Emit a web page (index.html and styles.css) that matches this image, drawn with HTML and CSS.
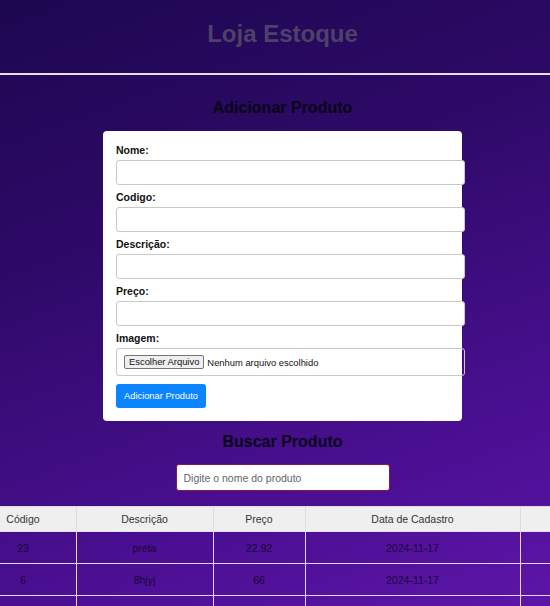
FILE: index.html
```html
<!DOCTYPE html>
<html lang="pt-BR">
<head>
<meta charset="utf-8">
<title>Loja Estoque</title>
<link rel="stylesheet" href="styles.css">
</head>
<body>
<div class="page">
  <header class="top">
    <h1 class="brand">Loja Estoque</h1>
  </header>

  <h2 class="section-title">Adicionar Produto</h2>
  <form class="card">
    <label class="lbl">Nome:</label>
    <input class="field" type="text">
    <label class="lbl">Codigo:</label>
    <input class="field" type="text">
    <label class="lbl">Descrição:</label>
    <input class="field" type="text">
    <label class="lbl">Preço:</label>
    <input class="field" type="text">
    <label class="lbl">Imagem:</label>
    <div class="file-field">
      <span class="file-btn">Escolher Arquivo</span>
      <span class="file-text">Nenhum arquivo escolhido</span>
    </div>
    <button class="submit" type="button">Adicionar Produto</button>
  </form>

  <h2 class="section-title search-title">Buscar Produto</h2>
  <input class="search" type="text" placeholder="Digite o nome do produto">

  <table class="grid">
    <colgroup>
      <col class="c1"><col class="c2"><col class="c3"><col class="c4"><col class="c5">
    </colgroup>
    <thead>
      <tr><th>Código</th><th>Descrição</th><th>Preço</th><th>Data de Cadastro</th><th></th></tr>
    </thead>
    <tbody>
      <tr><td>23</td><td>preta</td><td>22.92</td><td>2024-11-17</td><td></td></tr>
      <tr><td>6</td><td>8hjyj</td><td>66</td><td>2024-11-17</td><td></td></tr>
      <tr><td>&nbsp;</td><td></td><td></td><td></td><td></td></tr>
    </tbody>
  </table>
</div>
</body>
</html>
```

FILE: styles.css
```css
html, body {
  margin: 0;
  padding: 0;
  height: 100%;
}
body {
  overflow: hidden;
  font-family: "Liberation Sans", Arial, sans-serif;
  background: linear-gradient(160deg, #1d0750 0%, #2e0a68 35%, #4a0f92 75%, #5d15a8 100%);
  background-attachment: fixed;
}
.page {
  width: 565px;
  display: flex;
  flex-direction: column;
  align-items: center;
}
.top {
  align-self: stretch;
  box-sizing: border-box;
  height: 75px;
  padding-bottom: 6px;
  display: flex;
  align-items: center;
  justify-content: center;
  border-bottom: 2px solid #e6e0ee;
}
.brand {
  margin: 0;
  font-size: 24px;
  font-weight: bold;
  color: #4d4168;
  line-height: 28px;
}
.section-title {
  margin: 22px 0 12px;
  font-size: 16px;
  line-height: 22px;
  font-weight: bold;
  color: #0a0318;
}
.search-title {
  margin: 10px 0 11px;
}
.card {
  box-sizing: border-box;
  width: 359px;
  padding: 12px 13px 13px;
  background: #fff;
  border-radius: 4px;
  display: flex;
  flex-direction: column;
}
.lbl {
  display: block;
  font-size: 10.5px;
  font-weight: bold;
  line-height: 14px;
  color: #111;
  margin-bottom: 3px;
}
.field {
  width: 100%;
  height: 23px;
  padding: 0 7px;
  margin: 0 0 5px;
  border: 1px solid #c8c8c8;
  border-radius: 3px;
  font-size: 10.5px;
  font-family: inherit;
  outline: none;
}
.file-field {
  width: 100%;
  height: 26px;
  padding: 0 7px;
  margin-bottom: 8px;
  border: 1px solid #c8c8c8;
  border-radius: 3px;
  display: flex;
  align-items: center;
  gap: 3px;
  font-size: 9.4px;
  color: #111;
}
.file-btn {
  background: #efefef;
  border: 1px solid #767676;
  border-radius: 2px;
  padding: 0 4px;
  line-height: 12px;
  font-size: 9.4px;
  color: #111;
}
.submit {
  align-self: flex-start;
  width: 90px;
  height: 24px;
  padding: 0;
  border: none;
  border-radius: 3px;
  background: #0a84ff;
  color: #fff;
  font-family: inherit;
  font-size: 9.3px;
}
.search {
  box-sizing: border-box;
  width: 214px;
  height: 27px;
  padding: 0 7px;
  border: 1px solid #8c1450;
  border-radius: 3px;
  font-family: inherit;
  font-size: 10.5px;
  color: #333;
  outline: none;
}
.search::placeholder { color: #666; }
.grid {
  margin-top: 15px;
  flex: none;
  width: 625px;
  border-collapse: collapse;
  table-layout: fixed;
  font-size: 10.5px;
}
.c1 { width: 106px; }
.c2 { width: 137px; }
.c3 { width: 92px; }
.c4 { width: 215px; }
.c5 { width: 75px; }
.grid th {
  height: 24px;
  padding: 0;
  background: #efefef;
  color: #333;
  font-weight: normal;
  border: 1px solid #dcdcdc;
  border-bottom: 1px solid #e8dcf0;
}
.grid td {
  height: 31px;
  padding: 0;
  text-align: center;
  color: #1a0638;
  border: 1px solid #e4d4ee;
}
```
